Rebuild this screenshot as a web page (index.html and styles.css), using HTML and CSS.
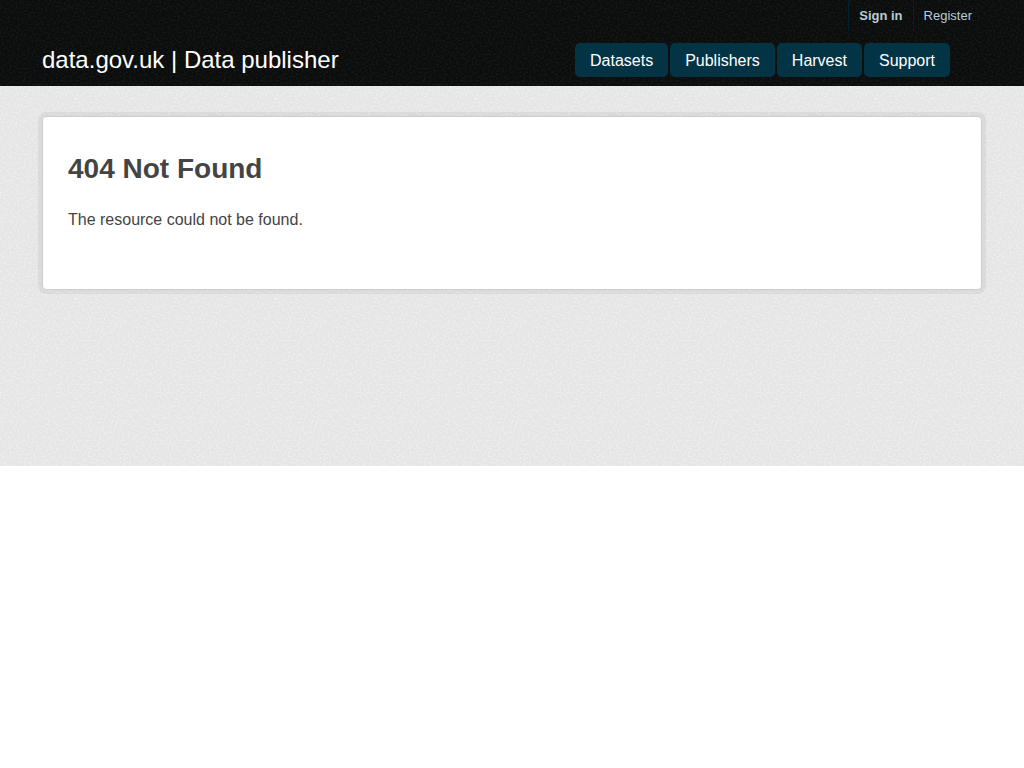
FILE: index.html
```html
<!DOCTYPE html>
<html lang="en">
<head>
<meta charset="utf-8">
<meta name="viewport" content="width=device-width, initial-scale=1">
<title>404 Not Found - data.gov.uk | Data publisher</title>
<link rel="stylesheet" href="styles.css">
</head>
<body>
<header class="masthead">
  <div class="container">
    <nav class="account" aria-label="Account">
      <ul class="account-list">
        <li class="account-item"><a class="account-link account-link-strong" href="#">Sign in</a></li>
        <li class="account-item"><a class="account-link" href="#">Register</a></li>
      </ul>
    </nav>
    <div class="masthead-row">
      <a class="site-title" href="#">data.gov.uk | Data publisher</a>
      <nav aria-label="Main">
        <ul class="nav-list">
          <li><a class="nav-link" href="#">Datasets</a></li>
          <li><a class="nav-link" href="#">Publishers</a></li>
          <li><a class="nav-link" href="#">Harvest</a></li>
          <li><a class="nav-link" href="#">Support</a></li>
        </ul>
      </nav>
    </div>
  </div>
</header>
<main class="main">
  <div class="container">
    <section class="panel">
      <h1 class="panel-title">404 Not Found</h1>
      <p class="panel-text">The resource could not be found.</p>
    </section>
  </div>
</main>
</body>
</html>
```
FILE: styles.css
```css
:root {
  --grain: url("data:image/svg+xml,%3Csvg xmlns='http://www.w3.org/2000/svg' width='100' height='100'%3E%3Cfilter id='n' x='0' y='0' width='100%25' height='100%25'%3E%3CfeTurbulence type='fractalNoise' baseFrequency='.5' numOctaves='2' stitchTiles='stitch'/%3E%3CfeColorMatrix values='0 0 0 0 1 0 0 0 0 1 0 0 0 0 1 4 0 0 0 -1.8'/%3E%3C/filter%3E%3Crect width='100' height='100' filter='url(%23n)' opacity='.3'/%3E%3C/svg%3E");
  --grain-dark: url("data:image/svg+xml,%3Csvg xmlns='http://www.w3.org/2000/svg' width='100' height='100'%3E%3Cfilter id='n' x='0' y='0' width='100%25' height='100%25'%3E%3CfeTurbulence type='fractalNoise' baseFrequency='.5' numOctaves='2' stitchTiles='stitch'/%3E%3CfeColorMatrix values='0 0 0 0 1 0 0 0 0 1 0 0 0 0 1 4 0 0 0 -1.8'/%3E%3C/filter%3E%3Crect width='100' height='100' filter='url(%23n)' opacity='.04'/%3E%3C/svg%3E");
}

* { box-sizing: border-box; }

body {
  margin: 0;
  background: #fff;
  color: #444;
  font: 16px/24px "Liberation Sans", Arial, sans-serif;
}

a { text-decoration: none; }

ul {
  list-style: none;
  margin: 0;
  padding: 0;
}

.container {
  max-width: 940px;
  margin: 0 auto;
}

.masthead {
  background: #0b0d0d var(--grain-dark);
  padding-bottom: 9px;
}

.account-list {
  display: flex;
  justify-content: flex-end;
}

.account-item { border-left: 1px solid #02222d; }

.account-link {
  display: block;
  padding: 0 10px;
  color: #b7cdd6;
  font-size: 13px;
  line-height: 31px;
}

.account-link-strong { font-weight: bold; }

.masthead-row {
  display: flex;
  justify-content: space-between;
  align-items: center;
  padding: 12px 32px 0 0;
}

.site-title {
  color: #fff;
  font-size: 24px;
  line-height: 34px;
}

.nav-list {
  display: flex;
  gap: 2px;
}

.nav-link {
  display: block;
  padding: 6px 15px 4px;
  border-radius: 5px;
  background: #023446;
  color: #fff;
}

.main {
  min-height: 380px;
  padding: 30px 20px;
  background: #e5e5e5 var(--grain);
}

.panel {
  min-height: 174px;
  padding: 35px 25px;
  border: 1px solid #ccc;
  border-radius: 4px;
  background: #fff;
  box-shadow: 0 0 0 4px rgba(0, 0, 0, 0.05);
}

.panel-title {
  margin: 0 0 22px;
  font-size: 28px;
  line-height: 34px;
}

.panel-text { margin: 0; }
```
